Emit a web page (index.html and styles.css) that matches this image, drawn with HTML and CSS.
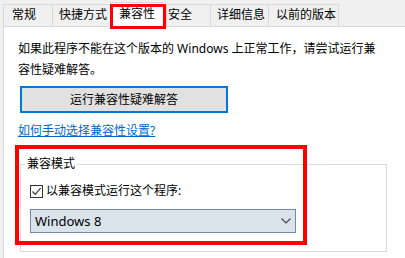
FILE: index.html
```html
<!DOCTYPE html>
<html lang="zh-CN">
<head>
<meta charset="utf-8">
<link rel="stylesheet" href="styles.css">
</head>
<body>
<div class="window">
  <div class="tabs">
    <div class="tab t1">常规</div>
    <div class="tab t2">快捷方式</div>
    <div class="tab t3 active">兼容性</div>
    <div class="tab t4">安全</div>
    <div class="tab t5">详细信息</div>
    <div class="tab t6">以前的版本</div>
  </div>
  <div class="panel">
    <p class="intro">如果此程序不能在这个版本的 Windows 上正常工作，请尝试运行兼容性疑难解答。</p>
    <div class="btn">运行兼容性疑难解答</div>
    <div class="link-row"><a class="link" href="#">如何手动选择兼容性设置?</a></div>
    <div class="group-wrap">
      <fieldset class="group">
        <legend class="legend">兼容模式</legend>
        <div class="check-row">
          <span class="checkbox">
            <svg width="11" height="11" viewBox="0 0 11 11"><path d="M1.5 5.5 L4.2 8.3 L9.6 2.2" fill="none" stroke="#333" stroke-width="1.2"/></svg>
          </span>
          <span class="check-label">以兼容模式运行这个程序:</span>
        </div>
        <div class="select">
          <span class="select-text">Windows 8</span>
          <svg class="chev" width="10" height="6" viewBox="0 0 10 6"><path d="M0.5 0.5 L5 5 L9.5 0.5" fill="none" stroke="#444" stroke-width="1.1"/></svg>
        </div>
      </fieldset>
      <div class="highlight"></div>
    </div>
  </div>
</div>
</body>
</html>
```

FILE: styles.css
```css
html, body {
  margin: 0;
  padding: 0;
}
body {
  width: 405px;
  height: 258px;
  overflow: hidden;
  background: #f0f0f0;
  font-family: "Noto Sans", "Noto Sans CJK SC", sans-serif;
  font-size: 12px;
  color: #000;
}
.window {
  display: flex;
  flex-direction: column;
  height: 258px;
}
.tabs {
  display: flex;
  align-items: flex-end;
  height: 26px;
  padding-left: 3px;
  position: relative;
  z-index: 2;
}
.tab {
  box-sizing: border-box;
  height: 22px;
  border: 1px solid #d9d9d9;
  border-bottom: none;
  margin-right: -1px;
  line-height: 20px;
  background: #f0f0f0;
  white-space: nowrap;
}
.t1 { width: 50px; padding-left: 8px; }
.t2 { width: 59px; padding-left: 6px; }
.t3 { width: 57px; padding-left: 8px; }
.t4 { width: 45px; padding-left: 1px; border-left-color: transparent; }
.t5 { width: 59px; padding-left: 6px; }
.t6 { width: 71px; padding-left: 7px; }
.tab.active {
  position: relative;
  height: 25px;
  margin-bottom: -1px;
  background: #fff;
  line-height: 22px;
  z-index: 3;
}
.tab.active::after {
  content: "";
  position: absolute;
  left: -1px;
  top: 1px;
  width: 56px;
  height: 25px;
  box-sizing: border-box;
  border: 3px solid #ff0000;
}
.panel {
  flex: 1;
  margin-left: 3px;
  background: #fff;
  border-left: 1px solid #d9d9d9;
  border-top: 1px solid #d9d9d9;
  padding: 11px 0 0 14px;
}
.intro {
  margin: 0;
  width: 362px;
  line-height: 21px;
}
.btn {
  box-sizing: border-box;
  width: 208px;
  height: 27px;
  margin: 6px 0 0 2px;
  background: #e1e1e1;
  border: 2px solid #0078d7;
  text-align: center;
  line-height: 23px;
}
.link-row {
  margin-top: 9px;
  height: 17px;
  line-height: 17px;
}
.link {
  color: #0066cc;
  text-decoration: underline;
}
.group-wrap {
  position: relative;
  margin-top: 18px;
}
.group {
  box-sizing: border-box;
  width: 367px;
  height: 95px;
  margin: 0 0 0 2px;
  padding: 0 9px;
  border: 1px solid #dcdcdc;
}
.legend {
  padding: 0 2px;
  margin-left: -5px;
  line-height: 14px;
}
.check-row {
  display: flex;
  align-items: center;
  margin-top: 13px;
  height: 14px;
}
.checkbox {
  box-sizing: border-box;
  width: 13px;
  height: 13px;
  border: 1px solid #333;
  display: flex;
  align-items: center;
  justify-content: center;
}
.check-label {
  margin-left: 3px;
  line-height: 14px;
}
.select {
  box-sizing: border-box;
  display: flex;
  align-items: center;
  justify-content: space-between;
  width: 266px;
  height: 24px;
  margin-top: 11px;
  padding: 0 4px 0 4px;
  background: #dae3ea;
  border: 1px solid #6f89a6;
  font-size: 13px;
}
.chev {
  margin-right: 0px;
}
.highlight {
  position: absolute;
  left: -3px;
  top: -12px;
  width: 292px;
  height: 100px;
  box-sizing: border-box;
  border: 4px solid #ff0000;
  pointer-events: none;
}
```
